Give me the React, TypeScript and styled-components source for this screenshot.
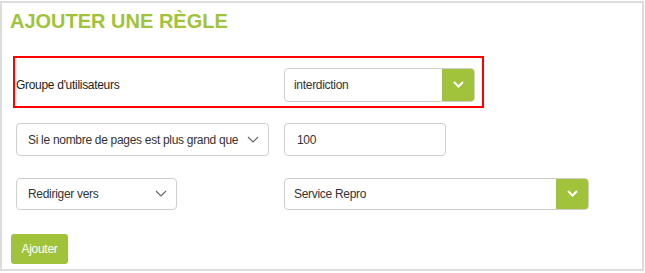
import styled, { createGlobalStyle } from 'styled-components';

const GlobalStyle = createGlobalStyle`
  html, body {
    margin: 0;
    padding: 0;
    background: #fff;
  }
  body {
    font-family: 'Liberation Sans', Arial, sans-serif;
    color: #333;
  }
`;

const green = '#a0c33b';

const Panel = styled.div`
  box-sizing: border-box;
  width: 644px;
  height: 270px;
  margin-top: 1px;
  border: 2px solid #dcdcdc;
  padding: 6px 8px 0 8px;
`;

const Title = styled.h2`
  margin: 0;
  font-size: 20px;
  line-height: 24px;
  font-weight: 700;
  color: ${green};
`;

const Rows = styled.div`
  display: flex;
  flex-direction: column;
  align-items: flex-start;
  margin-top: 23px;
  font-size: 12px;
  letter-spacing: -0.3px;
`;

const FieldRow = styled.div<{ $highlight?: boolean; $gap: number }>`
  display: grid;
  grid-template-columns: 268px auto;
  align-items: center;
  margin-bottom: ${(p) => p.$gap}px;
  ${(p) =>
    p.$highlight
      ? `
    margin-left: 3px;
    border: 2px solid #f00;
    padding: 10px 7px 4px 1px;
    width: 471px;
    box-sizing: border-box;
  `
      : `
    margin-left: 6px;
  `}
`;

const Label = styled.span`
  color: #222;
`;

const SelectBox = styled.div<{ $width: number; $height: number }>`
  box-sizing: border-box;
  width: ${(p) => p.$width}px;
  height: ${(p) => p.$height}px;
  border: 1px solid #cfcfcf;
  border-radius: 4px;
  background: #fff;
  display: flex;
  align-items: center;
  justify-content: space-between;
  padding: 0 9px 0 11px;
  color: #333;
  white-space: nowrap;
`;

const TextInput = styled.div`
  box-sizing: border-box;
  width: 162px;
  height: 33px;
  border: 1px solid #cfcfcf;
  border-radius: 4px;
  display: flex;
  align-items: center;
  padding-left: 12px;
  color: #333;
`;

const GroupSelect = styled.div<{ $width: number; $height: number }>`
  box-sizing: border-box;
  width: ${(p) => p.$width}px;
  height: ${(p) => p.$height}px;
  display: flex;
  border: 1px solid #cfcfcf;
  border-radius: 4px;
  overflow: hidden;
`;

const GroupText = styled.div`
  flex: 1;
  display: flex;
  align-items: center;
  padding-left: 9px;
  color: #333;
`;

const Addon = styled.div`
  width: 33px;
  margin: -1px -1px -1px 0;
  background: ${green};
  display: flex;
  align-items: center;
  justify-content: center;
`;

const SubmitButton = styled.button`
  margin-left: 1px;
  width: 57px;
  height: 30px;
  border: none;
  border-radius: 3px;
  background: ${green};
  color: #fff;
  font-family: 'Liberation Sans', Arial, sans-serif;
  font-size: 12px;
  letter-spacing: -0.3px;
  padding: 0;
`;

const Chevron = ({ color, weight, w }: { color: string; weight: number; w: number }) => (
  <svg width={w} height={w / 2 + 2} viewBox={`0 0 ${w} ${w / 2 + 2}`}>
    <polyline
      points={`1,1 ${w / 2},${w / 2} ${w - 1},1`}
      fill="none"
      stroke={color}
      strokeWidth={weight}
    />
  </svg>
);

export default function App() {
  return (
    <>
      <GlobalStyle />
      <Panel>
        <Title>AJOUTER UNE RÈGLE</Title>
        <Rows>
          <FieldRow $highlight $gap={15}>
            <Label>Groupe d'utilisateurs</Label>
            <GroupSelect $width={191} $height={34}>
              <GroupText>interdiction</GroupText>
              <Addon>
                <Chevron color="#fff" weight={2} w={11} />
              </Addon>
            </GroupSelect>
          </FieldRow>
          <FieldRow $gap={22}>
            <SelectBox $width={253} $height={33}>
              <span>Si le nombre de pages est plus grand que</span>
              <Chevron color="#666" weight={1.2} w={12} />
            </SelectBox>
            <TextInput>100</TextInput>
          </FieldRow>
          <FieldRow $gap={24}>
            <SelectBox $width={161} $height={32}>
              <span>Rediriger vers</span>
              <Chevron color="#666" weight={1.2} w={12} />
            </SelectBox>
            <GroupSelect $width={305} $height={32}>
              <GroupText>Service Repro</GroupText>
              <Addon>
                <Chevron color="#fff" weight={2} w={11} />
              </Addon>
            </GroupSelect>
          </FieldRow>
          <SubmitButton>Ajouter</SubmitButton>
        </Rows>
      </Panel>
    </>
  );
}
